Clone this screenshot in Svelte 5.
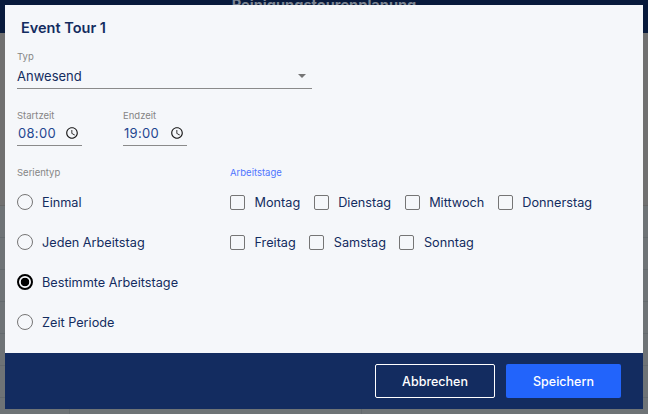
<script lang="ts">
  const serien = [
    { label: "Einmal", checked: false },
    { label: "Jeden Arbeitstag", checked: false },
    { label: "Bestimmte Arbeitstage", checked: true },
    { label: "Zeit Periode", checked: false },
  ];
  const tage = [
    ["Montag", "Dienstag", "Mittwoch", "Donnerstag"],
    ["Freitag", "Samstag", "Sonntag"],
  ];
  const times = [
    { label: "Startzeit", value: "08:00", width: 65 },
    { label: "Endzeit", value: "19:00", width: 64 },
  ];
  const rows = Array(9).fill(0);
</script>

<div class="page">
  <div class="backdrop">
    <div class="topbar">Reinigungstourenplanung</div>
    <div class="area">
      <div class="upper"></div>
      {#each rows as _}
        <div class="row"><i></i><i></i></div>
      {/each}
    </div>
  </div>

  <div class="modal">
    <div class="body">
      <h2>Event Tour 1</h2>

      <div class="field select">
        <div class="label">Typ</div>
        <div class="value">
          <span>Anwesend</span>
          <svg width="8" height="4" viewBox="0 0 10 5"><path d="M0 0h10L5 5z" fill="#757575" /></svg>
        </div>
      </div>

      <div class="times">
        {#each times as t}
          <div class="field time" style:width="{t.width}px">
            <div class="label">{t.label}</div>
            <div class="value">
              <span>{t.value}</span>
              <svg width="14" height="14" viewBox="0 0 24 24" fill="#1a1a1a">
                <path d="M11.99 2C6.47 2 2 6.48 2 12s4.47 10 9.99 10C17.52 22 22 17.52 22 12S17.52 2 11.99 2zM12 20c-4.42 0-8-3.58-8-8s3.58-8 8-8 8 3.58 8 8-3.58 8-8 8z" />
                <path d="M12.5 7H11v6l5.25 3.15.75-1.23-4.5-2.67z" />
              </svg>
            </div>
          </div>
        {/each}
      </div>

      <div class="columns">
        <div class="serien">
          <div class="label">Serientyp</div>
          {#each serien as s}
            <div class="radio-row">
              <span class="radio" class:on={s.checked}></span>
              <span class="text">{s.label}</span>
            </div>
          {/each}
        </div>
        <div class="tage">
          <div class="label blue">Arbeitstage</div>
          {#each tage as row}
            <div class="check-row">
              {#each row as tag}
                <div class="check">
                  <span class="box"></span>
                  <span class="text">{tag}</span>
                </div>
              {/each}
            </div>
          {/each}
        </div>
      </div>
    </div>

    <div class="footer">
      <button class="outline">Abbrechen</button>
      <button class="primary">Speichern</button>
    </div>
  </div>
</div>

<style>
  :global(body) {
    margin: 0;
    font-family: Inter, "Noto Sans", sans-serif;
  }

  .page {
    position: relative;
    width: 648px;
    height: 414px;
    overflow: hidden;
  }

  .backdrop {
    height: 100%;
    display: flex;
    flex-direction: column;
    background: #6e7376;
  }

  .topbar {
    height: 33px;
    flex: none;
    background: #081a3c;
    text-align: center;
    color: #7c8592;
    font-size: 14.6px;
    font-weight: 700;
    line-height: 11px;
  }

  .upper {
    height: 173px;
    background: #707070;
    border-bottom: 1px solid #666;
    box-sizing: border-box;
  }

  .row {
    height: 32px;
    box-sizing: border-box;
    border-bottom: 1px solid #646a6e;
    display: flex;
  }

  .row i {
    border-right: 1px solid #646a6e;
  }

  .row i:first-child {
    width: 69px;
  }

  .row i:last-child {
    width: 291px;
  }

  .modal {
    position: absolute;
    left: 5px;
    top: 5px;
    width: 638px;
    height: 404px;
    display: flex;
    flex-direction: column;
    background: #f5f7fa;
  }

  .body {
    flex: 1;
    padding: 14px 12px 0;
    box-sizing: border-box;
  }

  h2 {
    margin: 0 0 0 4px;
    font-size: 14.5px;
    line-height: 18px;
    font-weight: 600;
    color: #132c60;
  }

  .label {
    font-size: 9.5px;
    line-height: 12px;
    color: #858585;
  }

  .label.blue {
    color: #4f75ff;
  }

  .field .value {
    display: flex;
    align-items: center;
    justify-content: space-between;
    border-bottom: 1px solid #8a8a8a;
    color: #132c60;
    box-sizing: border-box;
  }

  .select {
    width: 295px;
    margin-top: 14px;
  }

  .select .label {
    margin-bottom: 2px;
  }

  .select .value {
    height: 24px;
    font-size: 13px;
    padding: 0 6px 2px 0;
  }

  .times {
    display: flex;
    gap: 41px;
    margin-top: 21px;
  }

  .time .label {
    margin-bottom: 1px;
  }

  .time .value {
    height: 23px;
    font-size: 13px;
    padding: 0 3px 2px 1px;
    color: #1f4690;
    letter-spacing: 0.3px;
  }

  .columns {
    display: flex;
    margin-top: 21px;
  }

  .serien {
    width: 213px;
  }

  .radio-row,
  .check-row {
    display: flex;
    align-items: center;
  }

  .radio-row {
    height: 40px;
    gap: 9px;
  }

  .radio-row:nth-child(2) {
    margin-top: 3px;
  }

  .radio {
    width: 16px;
    height: 16px;
    border-radius: 50%;
    border: 1.5px solid #757575;
    box-sizing: border-box;
    flex: none;
  }

  .radio.on {
    border: 2px solid #000;
    background: radial-gradient(circle, #000 4px, transparent 4.6px);
  }

  .text {
    font-size: 12.7px;
    color: #132c60;
  }

  .check-row {
    height: 40px;
    gap: 13.5px;
  }

  .tage .label {
    margin-bottom: 3px;
  }

  .check {
    display: flex;
    align-items: center;
    gap: 9.5px;
  }

  .box {
    width: 15px;
    height: 15px;
    border: 1.5px solid #757575;
    border-radius: 2px;
    box-sizing: border-box;
    flex: none;
  }

  .footer {
    height: 56px;
    flex: none;
    background: #132c60;
    display: flex;
    align-items: center;
    justify-content: flex-end;
    gap: 11px;
    padding: 0 22px 0 0;
  }

  button {
    height: 34px;
    border-radius: 2px;
    font-family: inherit;
    font-size: 12.5px;
    font-weight: 500;
    color: #fff;
    padding: 0;
  }

  .outline {
    width: 120px;
    background: transparent;
    border: 1px solid #fff;
  }

  .primary {
    width: 115px;
    background: #2264fb;
    border: none;
  }
</style>
